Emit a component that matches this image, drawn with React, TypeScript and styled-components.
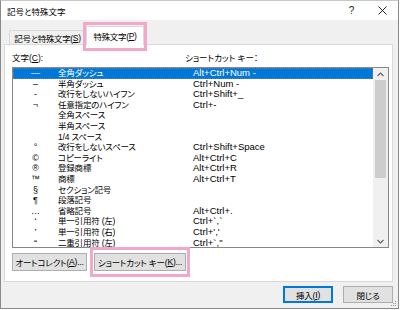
import React from 'react';
import styled, { createGlobalStyle } from 'styled-components';

const GlobalStyle = createGlobalStyle`
  html, body {
    margin: 0;
    padding: 0;
    background: #fff;
  }
  body {
    font-family: "Liberation Sans", "Noto Sans CJK JP", sans-serif;
    font-size: 9.5px;
    color: #000;
    font-feature-settings: "palt";
  }
`;

const Window = styled.div`
  position: relative;
  width: 399px;
  height: 309px;
  box-sizing: border-box;
  border: 1px solid #8a8a8a;
  border-top-color: #c8c8c8;
  background: #f0f0f0;
  display: flex;
  flex-direction: column;
  overflow: hidden;
`;

const TitleBar = styled.div`
  height: 19px;
  background: #fff;
  display: flex;
  align-items: center;
  padding-left: 6px;
`;

const Title = styled.div`
  flex: 1;
  font-size: 8.5px;
`;

const TitleButton = styled.div`
  width: 31px;
  height: 19px;
  display: flex;
  align-items: center;
  justify-content: center;
  font-size: 10px;
  color: #222;
`;

const TabStrip = styled.div`
  margin-top: 6px;
  height: 18px;
  padding-left: 8px;
  display: flex;
  align-items: flex-end;
`;

const Tab = styled.div<{ $active?: boolean }>`
  position: relative;
  box-sizing: border-box;
  height: ${(p) => (p.$active ? '19px' : '14px')};
  margin-bottom: ${(p) => (p.$active ? '-1px' : '0')};
  width: ${(p) => (p.$active ? '58px' : '77px')};
  display: flex;
  align-items: center;
  justify-content: center;
  font-size: 8.5px;
  letter-spacing: -0.35px;
  background: ${(p) => (p.$active ? '#fff' : '#f0f0f0')};
  border: 1px solid #d9d9d9;
  border-bottom: none;
  z-index: ${(p) => (p.$active ? 2 : 1)};
  white-space: nowrap;
`;

const Highlight = styled.div<{ $t: number; $r: number; $b: number; $l: number }>`
  position: absolute;
  top: ${(p) => p.$t}px;
  right: ${(p) => p.$r}px;
  bottom: ${(p) => p.$b}px;
  left: ${(p) => p.$l}px;
  border: 3px solid #f4a8c8;
  pointer-events: none;
`;

const Ul = styled.span`
  text-decoration: underline;
  text-underline-offset: 1px;
`;

const Panel = styled.div`
  position: relative;
  z-index: 1;
  margin: 0 5px 0 3px;
  height: 238px;
  box-sizing: border-box;
  border: 1px solid #d9d9d9;
  background: #fff;
  padding: 6px 0 0 7px;
  display: flex;
  flex-direction: column;
`;

const HeaderRow = styled.div`
  display: flex;
  height: 12px;
  align-items: center;
  font-size: 8.5px;
`;

const HeaderLabel = styled.div<{ $w?: number }>`
  width: ${(p) => (p.$w ? `${p.$w}px` : 'auto')};
`;

const ListBox = styled.div`
  margin-top: 4px;
  width: 377px;
  height: 181px;
  box-sizing: border-box;
  border: 1px solid #828790;
  display: flex;
  overflow: hidden;
`;

const Rows = styled.div`
  flex: 1;
  overflow: hidden;
`;

const Row = styled.div<{ $selected?: boolean }>`
  display: flex;
  height: 10.6px;
  line-height: 10.6px;
  box-sizing: border-box;
  white-space: nowrap;
  background: ${(p) => (p.$selected ? '#0078d7' : 'transparent')};
  color: ${(p) => (p.$selected ? '#fff' : '#000')};
  outline: ${(p) => (p.$selected ? '1px dotted #6a7f96' : 'none')};
  outline-offset: -1px;
`;

const SymbolCell = styled.div`
  width: 45px;
  text-align: center;
  font-size: 9px;
`;

const NameCell = styled.div`
  width: 135px;
  font-size: 8.5px;
  letter-spacing: -0.2px;
`;

const KeyCell = styled.div`
  flex: 1;
`;

const ScrollBar = styled.div`
  width: 15px;
  background: #f0f0f0;
  display: flex;
  flex-direction: column;
  align-items: center;
`;

const ScrollArrow = styled.div`
  height: 12px;
  width: 15px;
  display: flex;
  align-items: center;
  justify-content: center;
`;

const ScrollTrack = styled.div`
  flex: 1;
  width: 15px;
  display: flex;
  justify-content: center;
`;

const ScrollThumb = styled.div`
  width: 11px;
  height: 98px;
  background: #cdcdcd;
`;

const ButtonRow = styled.div`
  margin-top: 5px;
  display: flex;
  gap: 7px;
`;

const Button = styled.div<{ $w: number; $h?: number; $default?: boolean }>`
  position: relative;
  flex-shrink: 0;
  width: ${(p) => p.$w}px;
  height: ${(p) => p.$h ?? 18}px;
  box-sizing: border-box;
  background: #e1e1e1;
  border: 1px solid ${(p) => (p.$default ? '#0078d7' : '#adadad')};
  box-shadow: ${(p) => (p.$default ? 'inset 0 0 0 1px #0078d7' : 'none')};
  display: flex;
  align-items: center;
  justify-content: center;
  white-space: nowrap;
  font-size: 8.5px;
  letter-spacing: -0.2px;
`;

const Footer = styled.div`
  padding: 4px 5px 0 0;
  display: flex;
  justify-content: flex-end;
  gap: 10px;
`;

const Grip = styled.svg`
  position: absolute;
  right: 1px;
  bottom: 1px;
`;

type Entry = { sym: string; name: string; key: string };

const entries: Entry[] = [
  { sym: '—', name: '全角ダッシュ', key: 'Alt+Ctrl+Num -' },
  { sym: '–', name: '半角ダッシュ', key: 'Ctrl+Num -' },
  { sym: '-', name: '改行をしないハイフン', key: 'Ctrl+Shift+_' },
  { sym: '¬', name: '任意指定のハイフン', key: 'Ctrl+-' },
  { sym: '', name: '全角スペース', key: '' },
  { sym: '', name: '半角スペース', key: '' },
  { sym: '', name: '1/4 スペース', key: '' },
  { sym: '°', name: '改行をしないスペース', key: 'Ctrl+Shift+Space' },
  { sym: '©', name: 'コピーライト', key: 'Alt+Ctrl+C' },
  { sym: '®', name: '登録商標', key: 'Alt+Ctrl+R' },
  { sym: '™', name: '商標', key: 'Alt+Ctrl+T' },
  { sym: '§', name: 'セクション記号', key: '' },
  { sym: '¶', name: '段落記号', key: '' },
  { sym: '…', name: '省略記号', key: 'Alt+Ctrl+.' },
  { sym: '‘', name: '単一引用符 (左)', key: 'Ctrl+`,`' },
  { sym: '’', name: '単一引用符 (右)', key: "Ctrl+','" },
  { sym: '“', name: '二重引用符 (左)', key: 'Ctrl+`,"' },
];

const Chevron: React.FC<{ up?: boolean }> = ({ up }) => (
  <svg width="7" height="5" viewBox="0 0 7 5">
    <path
      d={up ? 'M0.5 4 L3.5 1 L6.5 4' : 'M0.5 1 L3.5 4 L6.5 1'}
      fill="none"
      stroke="#606060"
      strokeWidth="1.1"
    />
  </svg>
);

const App: React.FC = () => {
  return (
    <>
      <GlobalStyle />
      <Window>
        <TitleBar>
          <Title>記号と特殊文字</Title>
          <TitleButton>?</TitleButton>
          <TitleButton>
            <svg width="9" height="9" viewBox="0 0 9 9">
              <path d="M0.5 0.5 L8.5 8.5 M8.5 0.5 L0.5 8.5" stroke="#222" strokeWidth="1" />
            </svg>
          </TitleButton>
        </TitleBar>

        <TabStrip>
          <Tab>
            記号と特殊文字(<Ul>S</Ul>)
          </Tab>
          <Tab $active>
            特殊文字(<Ul>P</Ul>)
            <Highlight $t={-5} $r={-4} $b={-6} $l={-4} />
          </Tab>
        </TabStrip>

        <Panel>
          <HeaderRow>
            <HeaderLabel $w={173}>
              文字(<Ul>C</Ul>):
            </HeaderLabel>
            <HeaderLabel>ショートカット キー：</HeaderLabel>
          </HeaderRow>

          <ListBox>
            <Rows>
              {entries.map((e, i) => (
                <Row key={i} $selected={i === 0}>
                  <SymbolCell>{e.sym}</SymbolCell>
                  <NameCell>{e.name}</NameCell>
                  <KeyCell>{e.key}</KeyCell>
                </Row>
              ))}
            </Rows>
            <ScrollBar>
              <ScrollArrow>
                <Chevron up />
              </ScrollArrow>
              <ScrollTrack>
                <ScrollThumb />
              </ScrollTrack>
              <ScrollArrow>
                <Chevron />
              </ScrollArrow>
            </ScrollBar>
          </ListBox>

          <ButtonRow>
            <Button $w={75}>
              オートコレクト(<Ul>A</Ul>)...
            </Button>
            <Button $w={92}>
              ショートカット キー(<Ul>K</Ul>)...
              <Highlight $t={-7} $r={-5} $b={-7} $l={-5} />
            </Button>
          </ButtonRow>
        </Panel>

        <Footer>
          <Button $w={50} $h={17} $default>
            挿入(<Ul>I</Ul>)
          </Button>
          <Button $w={50} $h={17}>
            閉じる
          </Button>
        </Footer>

        <Grip width="8" height="8" viewBox="0 0 8 8">
          <rect x="6" y="2" width="1" height="1" fill="#999" />
          <rect x="4" y="4" width="1" height="1" fill="#999" />
          <rect x="6" y="4" width="1" height="1" fill="#999" />
          <rect x="2" y="6" width="1" height="1" fill="#999" />
          <rect x="4" y="6" width="1" height="1" fill="#999" />
          <rect x="6" y="6" width="1" height="1" fill="#999" />
        </Grip>
      </Window>
    </>
  );
};

export default App;
